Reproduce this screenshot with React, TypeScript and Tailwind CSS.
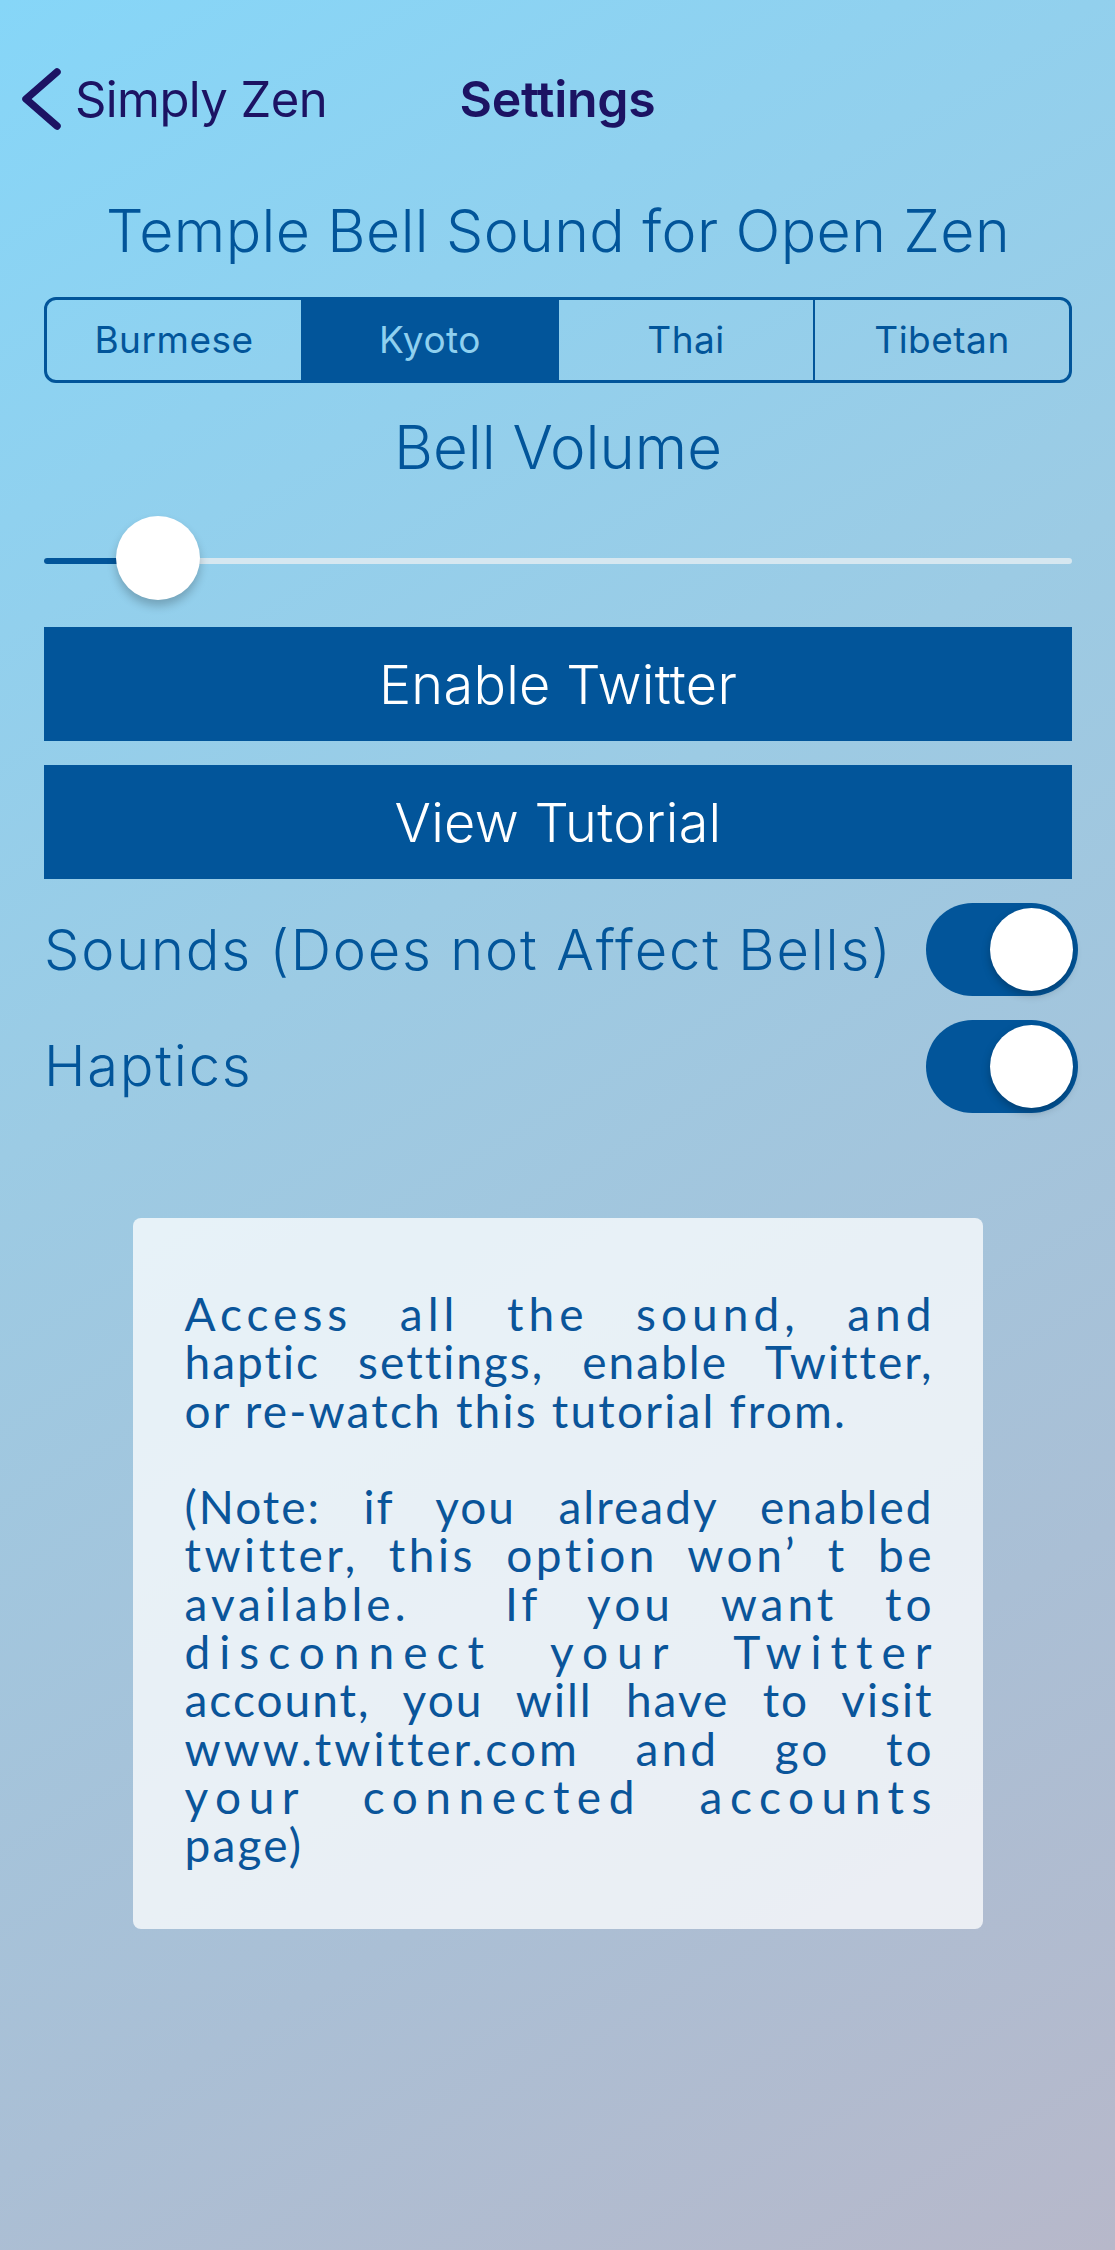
import React from "react";

function Toggle() {
  return (
    <div className="w-[152px] h-[93px] rounded-full bg-[#02559a] flex items-center justify-end pr-[5px] -mr-[6px] shrink-0">
      <div className="w-[83px] h-[83px] rounded-full bg-white shadow-[0_4px_8px_rgba(0,0,0,0.25)]" />
    </div>
  );
}

type Line = { t: string; ls: number; j: boolean };

const para1: Line[] = [
  { t: "Access all the sound, and", ls: 5, j: true },
  { t: "haptic settings, enable Twitter,", ls: 2, j: true },
  { t: "or re-watch this tutorial from.", ls: 2.2, j: false },
];
const para2: Line[] = [
  { t: "(Note: if you already enabled", ls: 2, j: true },
  { t: "twitter, this option won\u2019 t be", ls: 3.5, j: true },
  { t: "available.  If you want to", ls: 4, j: true },
  { t: "disconnect your Twitter", ls: 9, j: true },
  { t: "account, you will have to visit", ls: 2, j: true },
  { t: "www.twitter.com and go to", ls: 3, j: true },
  { t: "your connected accounts", ls: 7.5, j: true },
  { t: "page)", ls: 2.2, j: false },
];

function TextLine({ l }: { l: Line }) {
  return (
    <div
      className={
        l.j
          ? "whitespace-pre text-justify [text-align-last:justify]"
          : "whitespace-pre"
      }
      style={{ letterSpacing: `${l.ls}px`, marginRight: l.j ? `-${l.ls}px` : undefined }}
    >
      {l.t}
    </div>
  );
}

export default function App() {
  const segs = ["Burmese", "Kyoto", "Thai", "Tibetan"];
  return (
    <div
      className="w-full min-h-[2250px] bg-[linear-gradient(150deg,#86d6f8_0%,#9ccbe4_40%,#aabfd5_75%,#b7b8ca_100%)] text-[#02559a] overflow-hidden"
      style={{ fontFamily: '"Inter", "Liberation Sans", sans-serif' }}
    >
      {/* Nav bar */}
      <div className="pt-[67px] grid grid-cols-[1fr_auto_1fr] items-center h-[131px]">
        <div className="flex items-center pl-[21px] h-[64px]">
          <svg width="40" height="64" viewBox="0 0 40 64" className="shrink-0">
            <polyline
              points="36,5 5,32 36,59"
              fill="none"
              stroke="#1c1363"
              strokeWidth="7.5"
              strokeLinecap="round"
              strokeLinejoin="round"
            />
          </svg>
          <span className="ml-[14px] text-[49px] leading-none text-[#1c1363] tracking-[-0.6px]">
            Simply Zen
          </span>
        </div>
        <div className="text-[50px] leading-none font-semibold text-[#1c1363] tracking-[-0.3px]">
          Settings
        </div>
        <div />
      </div>

      <div className="px-[44px] pr-[43px]">
        {/* Title */}
        <div className="mt-[70px] text-center text-[59px] leading-[60px] font-light tracking-[0.4px]">
          Temple Bell Sound for Open Zen
        </div>

        {/* Segmented control */}
        <div className="mt-[36px] h-[86px] flex rounded-[12px] border-[3px] border-[#02559a] overflow-hidden">
          {segs.map((s, i) => (
            <div
              key={s}
              className={
                "flex-1 flex items-center justify-center text-[37px] tracking-[0.5px] " +
                (i > 0 ? "border-l-2 border-[#02559a] " : "") +
                (i === 1 ? "bg-[#02559a] text-[#8fd0ef]" : "text-[#02559a]")
              }
            >
              {s}
            </div>
          ))}
        </div>

        {/* Bell Volume */}
        <div className="mt-[34px] text-center text-[60px] leading-[60px] font-light">
          Bell Volume
        </div>

        {/* Slider */}
        <div className="mt-[39px] h-[84px] relative flex items-center">
          <div className="w-full h-[6px] rounded-full bg-[#d6e7f0] mt-[6px] flex">
            <div className="w-[80px] h-full rounded-full bg-[#02559a]" />
          </div>
          <div className="absolute left-[72px] top-0 w-[84px] h-[84px] rounded-full bg-white shadow-[0_6px_10px_rgba(0,0,0,0.22)]" />
        </div>

        {/* Buttons */}
        <div className="mt-[27px] h-[114px] bg-[#02559a] flex items-center justify-center text-white text-[54px] font-light tracking-[0.3px]">
          Enable Twitter
        </div>
        <div className="mt-[24px] h-[114px] bg-[#02559a] flex items-center justify-center text-white text-[54px] font-light tracking-[0.3px]">
          View Tutorial
        </div>

        {/* Toggles */}
        <div className="mt-[24px] h-[93px] flex items-center justify-between">
          <span className="text-[56px] leading-none font-light tracking-[1.8px]">
            Sounds (Does not Affect Bells)
          </span>
          <Toggle />
        </div>
        <div className="mt-[24px] h-[92px] flex items-center justify-between">
          <span className="text-[56px] leading-none font-light tracking-[1.8px]">Haptics</span>
          <Toggle />
        </div>
      </div>

      {/* Info box */}
      <div className="mt-[106px] mx-auto w-[850px] h-[711px] rounded-[8px] bg-white/75 pt-[72px] pl-[52px] pr-[51px]">
        <div
          className="text-[46px] leading-[48.3px] text-[#0a559a]"
          style={{ fontFamily: '"Lato", "Noto Sans", sans-serif' }}
        >
          {para1.map((l) => (
            <TextLine key={l.t} l={l} />
          ))}
          <div className="h-[48.3px]" />
          {para2.map((l) => (
            <TextLine key={l.t} l={l} />
          ))}
        </div>
      </div>
    </div>
  );
}
